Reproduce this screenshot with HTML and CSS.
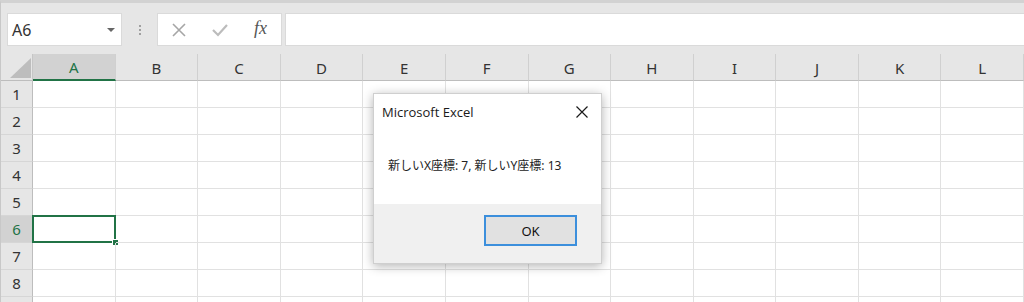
FILE: index.html
```html
<!DOCTYPE html>
<html lang="ja">
  <head>
    <meta charset="UTF-8" />
    <title>Microsoft Excel</title>
    <link rel="stylesheet" href="styles.css">
  </head>
  <body>
    <div class="formula-row">
      <div class="name-box">
        <span>A6</span>
        <span class="caret"></span>
      </div>
      <div class="grip">
        <i></i><i></i><i></i>
      </div>
      <div class="fx-buttons">
        <svg width="14" height="14" viewBox="0 0 14 14">
          <path d="M1 1 L13 13 M13 1 L1 13" stroke="#a6a6a6" stroke-width="1.6" fill="none" />
        </svg>
        <svg width="16" height="14" viewBox="0 0 16 14">
          <path d="M1 7 L6 12 L15 2" stroke="#bcbcbc" stroke-width="2.2" fill="none" />
        </svg>
        <span class="fx">fx</span>
      </div>
      <div class="formula-input"></div>
    </div>

    <div class="sheet" id="sheet"></div>

    <div class="dialog">
      <div class="dialog-body">
        <div class="dialog-title">
          <span>Microsoft Excel</span>
          <svg width="12" height="12" viewBox="0 0 12 12">
            <path d="M0.5 0.5 L11.5 11.5 M11.5 0.5 L0.5 11.5" stroke="#1a1a1a" stroke-width="1.2" fill="none" />
          </svg>
        </div>
        <div class="dialog-msg">新しいX座標: 7, 新しいY座標: 13</div>
      </div>
      <div class="dialog-foot">
        <button class="ok-btn">OK</button>
      </div>
    </div>

    <script>
      const sheet = document.getElementById("sheet");
      const cols = "ABCDEFGHIJKL".split("");

      // header row
      const corner = document.createElement("div");
      corner.className = "corner";
      sheet.appendChild(corner);
      cols.forEach(function (c) {
        const h = document.createElement("div");
        h.className = "col-head" + (c === "A" ? " selected" : "");
        h.innerText = c;
        sheet.appendChild(h);
      });

      // rows 1..8 (plus a sliver of row 9)
      for (let r = 1; r <= 9; r++) {
        const rh = document.createElement("div");
        rh.className = "row-head" + (r === 6 ? " selected" : "");
        rh.innerText = r <= 8 ? r : "";
        sheet.appendChild(rh);
        cols.forEach(function (c) {
          const cell = document.createElement("div");
          cell.className = "cell";
          if (c === "A" && r === 6) cell.classList.add("active");
          sheet.appendChild(cell);
        });
      }
    </script>
  </body>
</html>
```

FILE: styles.css
```css
* {
  box-sizing: border-box;
}

html,
body {
  margin: 0;
  height: 302px;
  overflow: hidden;
}

body {
  font-family: "Noto Sans", "Noto Sans CJK JP", sans-serif;
  background-color: #e6e6e6;
  border-top: 3px solid #d2d2d2;
  border-left: 1px solid #c8c8c8;
  position: relative;
}

.formula-row {
  display: flex;
  align-items: stretch;
  height: 51px;
  padding: 10px 0 8px 6px;
}

.name-box {
  width: 115px;
  background-color: #fff;
  border: 1px solid #dadada;
  display: flex;
  align-items: center;
  justify-content: space-between;
  padding: 0 6px 0 4px;
  font-size: 16px;
  color: #333;
}

.caret {
  width: 0;
  height: 0;
  border-left: 4px solid transparent;
  border-right: 4px solid transparent;
  border-top: 4px solid #666;
}

.grip {
  width: 35px;
  display: flex;
  flex-direction: column;
  align-items: center;
  justify-content: center;
  gap: 2px;
}

.grip i {
  width: 2px;
  height: 2px;
  background-color: #a0a0a0;
}

.fx-buttons {
  width: 125px;
  background-color: #fff;
  border: 1px solid #dadada;
  display: flex;
  align-items: center;
  padding: 0 14px 0 14px;
  justify-content: space-between;
}

.fx {
  font-family: "Liberation Serif", serif;
  font-style: italic;
  font-size: 18px;
  color: #555;
  margin-top: -3px;
}

.formula-input {
  flex: 1;
  margin-left: 3px;
  background-color: #fff;
  border: 1px solid #dadada;
  border-right: none;
}

.sheet {
  display: grid;
  grid-template-columns: 32px repeat(12, 1fr);
  grid-template-rows: 27px repeat(9, 27px);
  height: 248px;
  overflow: hidden;
  background-color: #fff;
}

.corner {
  background-color: #e6e6e6;
  border-right: 1px solid #c6c6c6;
  border-bottom: 1px solid #bdbdbd;
  position: relative;
}

.corner::after {
  content: "";
  position: absolute;
  right: 1px;
  bottom: 2px;
  width: 0;
  height: 0;
  border-left: 21px solid transparent;
  border-bottom: 20px solid #bdbdbd;
}

.col-head {
  background-color: #e6e6e6;
  border-right: 1px solid #d0d0d0;
  border-bottom: 1px solid #bdbdbd;
  display: flex;
  align-items: center;
  justify-content: center;
  font-size: 15px;
  color: #333;
  padding-top: 1px;
}

.col-head.selected {
  background-color: #d2d2d2;
  color: #217346;
  border-bottom: 2px solid #217346;
}

.row-head {
  background-color: #e6e6e6;
  border-right: 1px solid #bdbdbd;
  border-bottom: 1px solid #d6d6d6;
  display: flex;
  align-items: center;
  justify-content: center;
  font-size: 15px;
  color: #333;
}

.row-head.selected {
  background-color: #d2d2d2;
  color: #217346;
}

.cell {
  border-right: 1px solid #e1e1e1;
  border-bottom: 1px solid #e1e1e1;
  position: relative;
}

.cell.active::before {
  content: "";
  position: absolute;
  left: -1px;
  top: -1px;
  right: -1px;
  bottom: -1px;
  border: 2px solid #217346;
}

.cell.active::after {
  content: "";
  position: absolute;
  right: -4px;
  bottom: -4px;
  width: 5px;
  height: 5px;
  background-color: #217346;
  border: 1px solid #fff;
  box-sizing: content-box;
}

/* message box */
.dialog {
  position: absolute;
  left: 372px;
  top: 90px;
  width: 229px;
  height: 171px;
  background-color: #fff;
  border: 1px solid #cfcfcf;
  box-shadow: 0 2px 10px rgba(0, 0, 0, 0.3);
  display: flex;
  flex-direction: column;
}

.dialog-body {
  flex: 1;
}

.dialog-title {
  display: flex;
  align-items: center;
  justify-content: space-between;
  padding: 7px 13px 0 8px;
  height: 28px;
  font-family: "Open Sans", "Noto Sans", sans-serif;
  font-size: 13px;
  color: #1a1a1a;
}

.dialog-msg {
  padding: 34px 0 0 14px;
  font-size: 12px;
  color: #222;
}

.dialog-foot {
  height: 59px;
  background-color: #f0f0f0;
  display: flex;
  justify-content: flex-end;
  align-items: flex-start;
  padding: 11px 24px 0 0;
}

.ok-btn {
  width: 93px;
  height: 31px;
  background-color: #e1e1e1;
  border: 2px solid #3c8fdc;
  font-family: "Noto Sans", sans-serif;
  font-size: 13px;
  color: #111;
  padding: 0;
}
```
